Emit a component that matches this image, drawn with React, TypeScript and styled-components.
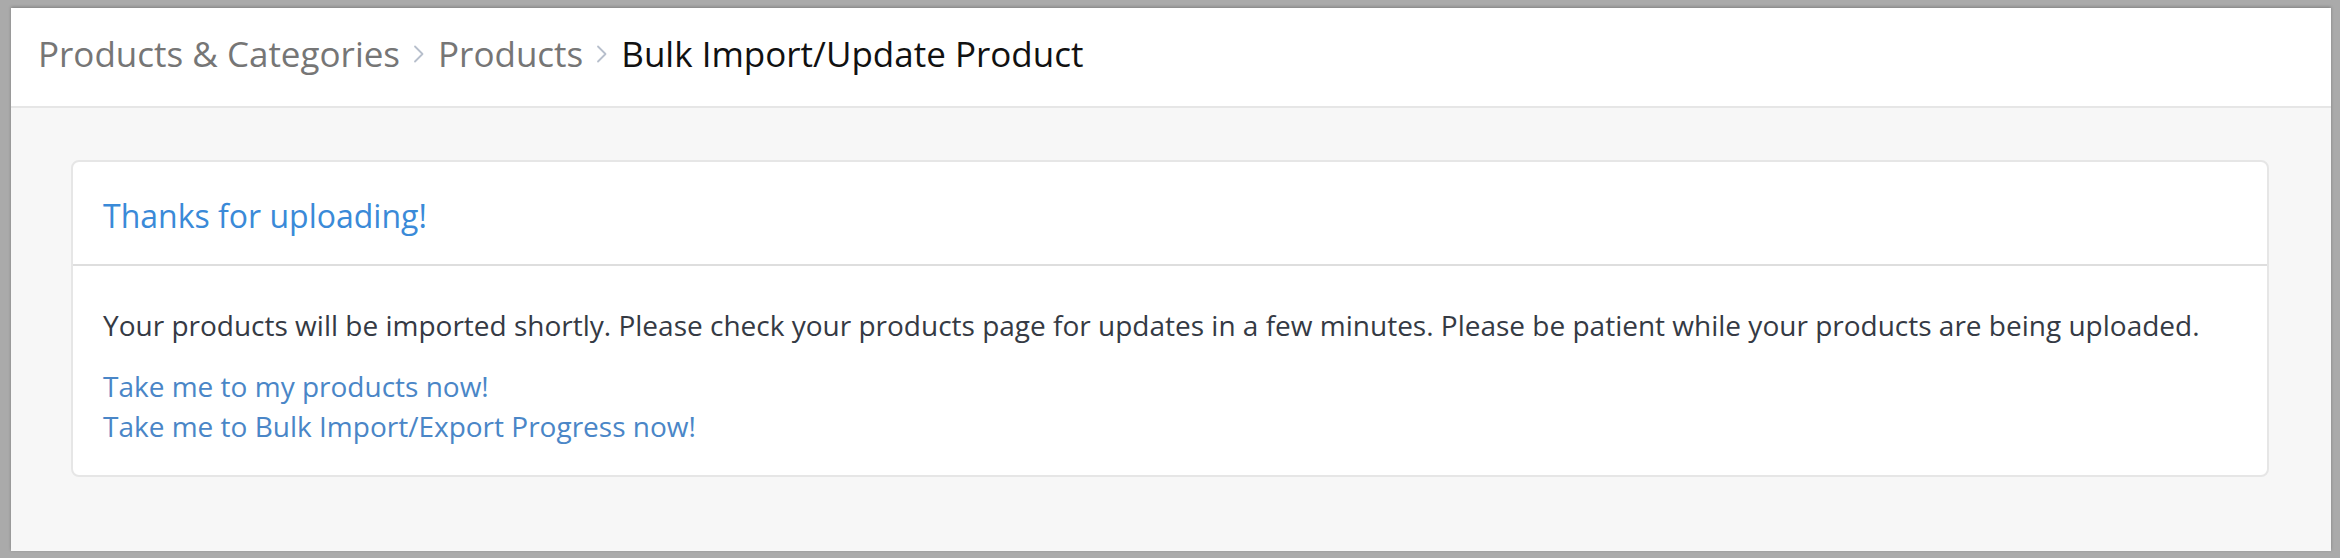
import React from "react";
import styled, { createGlobalStyle } from "styled-components";

const GlobalStyle = createGlobalStyle`
  html, body {
    margin: 0;
    padding: 0;
    background: #aaaaaa;
  }
  body {
    font-family: "Open Sans", "Noto Sans", "Liberation Sans", sans-serif;
    -webkit-font-smoothing: antialiased;
  }
`;

const Frame = styled.div`
  box-sizing: border-box;
  height: 558px;
  padding: 8px 9px 7px 11px;
  background: #aaaaaa;
`;

const Page = styled.div`
  height: 100%;
  display: flex;
  flex-direction: column;
  background: #f7f7f7;
  box-shadow: 0 -1px 3px rgba(0, 0, 0, 0.25);
`;

const Header = styled.header`
  box-sizing: border-box;
  height: 100px;
  display: flex;
  align-items: center;
  padding: 0 0 6px 27px;
  background: #ffffff;
  border-bottom: 2px solid #e6e6e6;
`;

const Crumb = styled.span<{ $active?: boolean }>`
  font-size: 35px;
  line-height: 40px;
  color: ${(p) => (p.$active ? "#111111" : "#767676")};
  white-space: nowrap;
`;

const Separator = styled.svg`
  width: 12px;
  height: 20px;
  margin: 0 13px;
  flex-shrink: 0;
`;

const Content = styled.main`
  flex: 1;
  padding: 52px 62px 0 60px;
`;

const Card = styled.section`
  background: #ffffff;
  border: 2px solid #e6e6e6;
  border-radius: 8px;
`;

const CardHeader = styled.div`
  padding: 34px 30px 28px;
  border-bottom: 2px solid #dedede;
`;

const Title = styled.h2`
  margin: 0;
  font-size: 32px;
  font-weight: 400;
  line-height: 40px;
  color: #3a8ad8;
`;

const CardBody = styled.div`
  padding: 39px 30px 29px;
  font-size: 28px;
  line-height: 40px;
`;

const Message = styled.p`
  margin: 0 0 21px;
  color: #353a44;
`;

const Links = styled.div`
  display: flex;
  flex-direction: column;
  align-items: flex-start;
`;

const Link = styled.a`
  color: #4a86c7;
  text-decoration: none;
  cursor: pointer;
`;

const Chevron = () => (
  <Separator viewBox="0 0 12 20" fill="none">
    <path
      d="M2 2.5 L9.5 10 L2 17.5"
      stroke="#b7bfcc"
      strokeWidth="1.8"
      strokeLinecap="round"
      strokeLinejoin="round"
    />
  </Separator>
);

const crumbs = ["Products & Categories", "Products", "Bulk Import/Update Product"];

const App: React.FC = () => {
  return (
    <>
      <GlobalStyle />
      <Frame>
        <Page>
          <Header>
            {crumbs.map((c, i) => (
              <React.Fragment key={c}>
                {i > 0 && <Chevron />}
                <Crumb $active={i === crumbs.length - 1}>{c}</Crumb>
              </React.Fragment>
            ))}
          </Header>
          <Content>
            <Card>
              <CardHeader>
                <Title>Thanks for uploading!</Title>
              </CardHeader>
              <CardBody>
                <Message>
                  Your products will be imported shortly. Please check your products page for
                  updates in a few minutes. Please be patient while your products are being
                  uploaded.
                </Message>
                <Links>
                  <Link>Take me to my products now!</Link>
                  <Link>Take me to Bulk Import/Export Progress now!</Link>
                </Links>
              </CardBody>
            </Card>
          </Content>
        </Page>
      </Frame>
    </>
  );
};

export default App;
